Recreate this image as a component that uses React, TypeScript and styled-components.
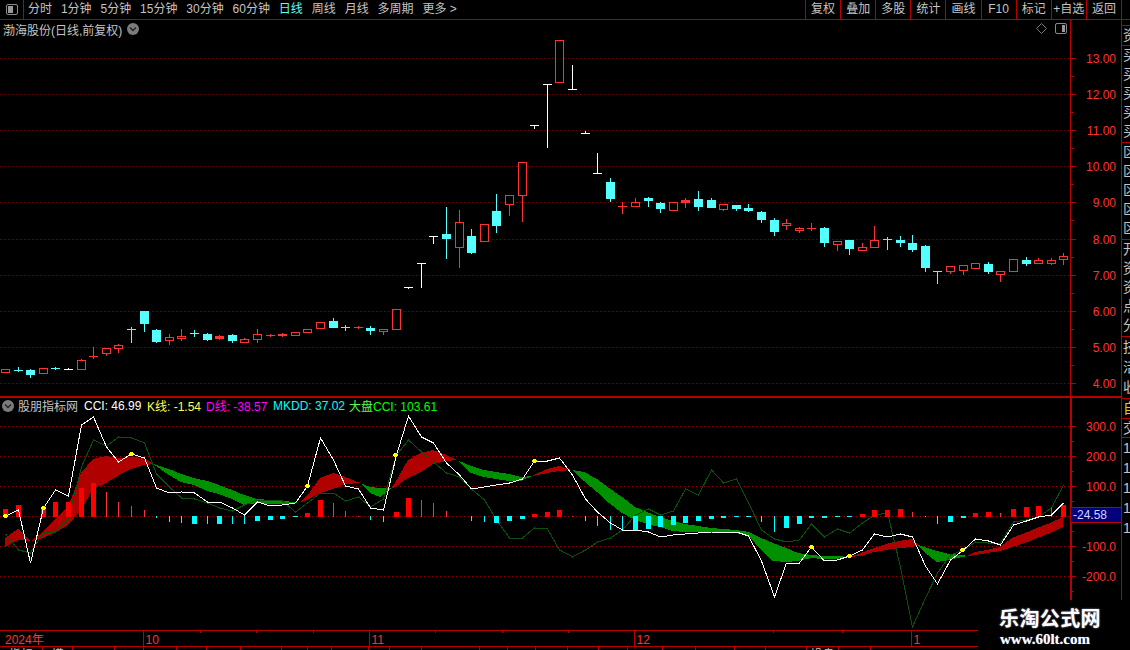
import React from "react";
import styled, { createGlobalStyle } from "styled-components";

const RED_LINE = "#b80000";
const AXIS_RED = "#ff3232";
const CYAN = "#54ffff";
const FONT = `"Liberation Sans", "Noto Sans CJK SC", sans-serif`;

const Global = createGlobalStyle`
  html, body { margin: 0; padding: 0; background: #000; }
  body { font-family: ${FONT}; font-size: 12px; }
`;

const Page = styled.div`
  position: relative;
  width: 1130px;
  height: 650px;
  overflow: hidden;
  background: #000;
  display: flex;
  flex-direction: column;
`;

const Toolbar = styled.div`
  height: 19px;
  flex: none;
  display: flex;
  align-items: center;
  border-bottom: 1px solid ${RED_LINE};
  color: #c4c4c4;
  line-height: 19px;
`;
const PanelToggle = styled.div`
  width: 23px;
  height: 19px;
  border-right: 1px solid ${RED_LINE};
  display: flex;
  align-items: center;
  justify-content: center;
  flex: none;
`;
const Periods = styled.div`
  display: flex;
  gap: 8.9px;
  padding-left: 4px;
`;
const Period = styled.span<{ $active?: boolean }>`
  color: ${(p) => (p.$active ? CYAN : "#c4c4c4")};
  white-space: nowrap;
`;
const Spacer = styled.div`
  flex: 1;
`;
const Actions = styled.div`
  display: flex;
  width: 316px;
  margin-right: 8px;
  border-right: 1px solid ${RED_LINE};
`;
const ActionButton = styled.div`
  flex: 1;
  height: 19px;
  border-left: 1px solid ${RED_LINE};
  text-align: center;
  white-space: nowrap;
  overflow: hidden;
`;

const Body = styled.div`
  flex: 1;
  display: flex;
  min-height: 0;
`;
const Charts = styled.div`
  width: 1121px;
  flex: none;
  display: flex;
  flex-direction: column;
`;
const Pane = styled.div<{ $h: number; $rule?: boolean }>`
  position: relative;
  height: ${(p) => p.$h}px;
  flex: none;
  display: flex;
  box-sizing: border-box;
  ${(p) => (p.$rule ? `border-bottom: 2px solid ${RED_LINE};` : "")}
`;
const Plot = styled.svg`
  display: block;
  width: 1070px;
  height: 100%;
  flex: none;
`;
const AxisSvg = styled.svg<{ $line: number }>`
  display: block;
  flex: 1;
  height: 100%;
  border-left: ${(p) => p.$line}px solid ${RED_LINE};
  box-sizing: border-box;
`;
const AxisLabel = styled.text`
  font-family: ${FONT};
  font-size: 12px;
  fill: ${AXIS_RED};
`;

const PaneTitle = styled.div`
  position: absolute;
  left: 3px;
  top: 1px;
  height: 16px;
  display: flex;
  align-items: center;
  gap: 5px;
  color: #c4c4c4;
  white-space: nowrap;
`;
const PaneTools = styled.div`
  position: absolute;
  left: 1036px;
  top: 3px;
  display: flex;
  align-items: center;
  gap: 8px;
`;
const IndicatorHeader = styled.div`
  position: absolute;
  left: 2px;
  top: 0;
  height: 15px;
  display: flex;
  align-items: center;
  white-space: nowrap;
`;
const IndicatorName = styled.span`
  color: #c4c4c4;
  margin-left: 4px;
  width: 66px;
`;
const Reading = styled.span<{ $c: string; $w: number }>`
  color: ${(p) => p.$c};
  width: ${(p) => p.$w}px;
`;
const Mark = styled.span<{ $c: string }>`
  color: ${(p) => p.$c};
`;
const ValueBadge = styled.div`
  position: absolute;
  left: 1071px;
  top: 109px;
  width: 50px;
  height: 16px;
  box-sizing: border-box;
  background: #00007c;
  border-top: 1px solid ${RED_LINE};
  border-bottom: 1px solid ${RED_LINE};
  color: #d4d4ff;
  line-height: 15px;
  padding-left: 2px;
`;

const DateAxis = styled.svg`
  display: block;
  width: 1121px;
  height: 16px;
  flex: none;
  border-top: 1px solid ${RED_LINE};
  box-sizing: border-box;
`;
const Tabs = styled.div`
  display: flex;
  flex: 1;
  overflow: hidden;
  border-top: 1px solid ${RED_LINE};
`;
const Tab = styled.div`
  flex: none;
  height: 18px;
  box-sizing: border-box;
  border-right: 1px solid ${RED_LINE};
  color: #c4c4c4;
  line-height: 16px;
  text-align: center;
  white-space: nowrap;
  overflow: hidden;
`;

const Side = styled.div`
  flex: 1;
  display: flex;
  flex-direction: column;
  border-left: 1px solid ${RED_LINE};
  overflow: hidden;
`;
const SideGap = styled.div<{ $h: number }>`
  height: ${(p) => p.$h}px;
  flex: none;
`;
const SideCell = styled.div<{ $h: number; $c?: string }>`
  height: ${(p) => p.$h}px;
  flex: none;
  box-sizing: border-box;
  border-top: 1px solid ${RED_LINE};
  overflow: hidden;
  color: ${(p) => p.$c || "#c4c4c4"};
  padding-left: 1px;
`;
const SideText = styled.div<{ $lh: number }>`
  width: 14px;
  font-size: 14px;
  line-height: ${(p) => p.$lh}px;
  word-break: break-all;
`;

const Watermark = styled.div`
  position: absolute;
  right: 0;
  bottom: 0;
  width: 152px;
  height: 50px;
  background: #000;
  display: flex;
  flex-direction: column;
  align-items: flex-start;
  padding-left: 21px;
  box-sizing: border-box;
  color: #fff;
`;
const WatermarkTitle = styled.div`
  margin-top: 7px;
  font-family: "Noto Sans CJK SC", serif;
  font-weight: 700;
  font-size: 20px;
  line-height: 22px;
  letter-spacing: 0.4px;
  text-shadow: 0 0 2px #9aa0c8;
`;
const WatermarkUrl = styled.div`
  margin-top: 3px;
  margin-left: 1px;
  font-family: "Liberation Serif", serif;
  font-weight: 700;
  font-size: 15px;
  line-height: 15px;
  text-shadow: 0 0 1px #8088c0;
`;

type Candle = [string, number, number, number, number];
// colour ('r' hollow red, 'R' solid red, 'c' cyan, 'w' white), wick top, body top, body bottom, wick bottom
const candles: Candle[] = [
  ["r", 369, 369, 372, 372], ["c", 367, 370, 370, 371], ["c", 369, 370, 374, 377], ["r", 368, 368, 373, 373],
  ["c", 367, 368, 368, 369], ["w", 368, 369, 369, 369], ["r", 359, 360, 369, 369], ["R", 347, 356, 356, 358],
  ["r", 348, 348, 353, 355], ["r", 344, 345, 348, 352], ["c", 327, 329, 329, 342], ["c", 311, 311, 323, 331],
  ["c", 329, 330, 341, 342], ["r", 334, 337, 340, 344], ["r", 329, 336, 338, 340], ["c", 330, 333, 333, 336],
  ["c", 333, 334, 339, 340], ["R", 335, 336, 338, 339], ["c", 334, 335, 340, 342], ["r", 338, 339, 342, 342],
  ["r", 329, 334, 339, 342], ["R", 334, 335, 335, 336], ["R", 333, 334, 335, 336], ["r", 332, 332, 335, 335],
  ["r", 329, 329, 332, 332], ["r", 322, 322, 328, 328], ["c", 318, 321, 327, 327], ["c", 325, 327, 327, 330],
  ["R", 326, 327, 327, 328], ["c", 326, 328, 330, 334], ["r", 329, 329, 331, 334], ["r", 309, 309, 329, 329],
  ["w", 287, 287, 287, 288], ["w", 263, 263, 263, 287], ["w", 236, 236, 236, 243], ["c", 207, 234, 238, 258],
  ["r", 210, 222, 247, 267], ["c", 229, 236, 252, 253], ["r", 224, 224, 241, 241], ["c", 194, 211, 225, 232],
  ["r", 195, 195, 204, 215], ["r", 162, 162, 195, 221], ["w", 125, 125, 125, 128], ["w", 84, 84, 84, 147],
  ["r", 40, 40, 82, 82], ["w", 65, 89, 89, 89], ["w", 131, 133, 133, 133], ["w", 153, 173, 173, 173],
  ["c", 178, 182, 198, 201], ["R", 202, 206, 206, 213], ["r", 198, 202, 206, 206], ["c", 197, 198, 200, 206],
  ["c", 202, 203, 208, 212], ["r", 202, 202, 210, 210], ["R", 198, 200, 202, 207], ["c", 191, 199, 206, 210],
  ["c", 198, 200, 207, 207], ["r", 204, 204, 209, 210], ["c", 205, 205, 208, 210], ["c", 204, 208, 210, 211],
  ["c", 211, 212, 219, 222], ["c", 218, 220, 231, 235], ["r", 219, 223, 225, 229], ["r", 227, 228, 230, 232],
  ["R", 223, 228, 228, 230], ["c", 227, 228, 242, 246], ["r", 241, 241, 244, 250], ["c", 240, 240, 248, 254],
  ["r", 243, 247, 250, 250], ["r", 226, 240, 247, 247], ["c", 237, 239, 239, 249], ["c", 236, 240, 242, 246],
  ["c", 235, 243, 249, 251], ["c", 245, 246, 267, 271], ["c", 271, 271, 271, 283], ["r", 266, 266, 271, 273],
  ["r", 265, 265, 270, 274], ["r", 263, 263, 268, 268], ["c", 262, 264, 271, 273], ["r", 271, 271, 274, 281],
  ["r", 259, 259, 271, 271], ["c", 257, 260, 263, 265], ["r", 258, 260, 263, 263], ["r", 258, 260, 263, 264],
  ["r", 253, 256, 259, 264],
];

const white = [516, 510, 563, 508, 490, 496, 425, 417, 447, 462, 454, 458, 488, 493, 492, 493, 502, 502, 508, 515, 502, 506, 505, 503, 486, 438, 460, 486, 489, 508, 510, 455, 416, 437, 443, 463, 475, 489, 487, 485, 483, 479, 461, 461, 458, 475, 499, 512, 523, 530, 530, 532, 537, 535, 534, 533, 532, 532, 532, 536, 561, 597, 563, 563, 547, 561, 560, 556, 550, 534, 537, 534, 537, 566, 584, 560, 550, 539, 541, 545, 525, 521, 517, 515, 503];
const green = [534, 550, 553, 532, 532, 518, 467, 440, 446, 437, 438, 443, 474, 487, 498, 499, 503, 508, 511, 505, 500, 500, 501, 512, 503, 493, 493, 501, 497, 507, 499, 455, 440, 452, 462, 473, 477, 489, 500, 520, 538, 538, 528, 529, 550, 557, 550, 542, 538, 530, 515, 509, 515, 511, 489, 495, 470, 483, 479, 503, 530, 539, 542, 540, 524, 537, 529, 533, 523, 515, 513, 567, 627, 598, 573, 555, 550, 542, 543, 543, 522, 520, 517, 508, 485];
const bars = [8, 12, 0, 8, 15, 15, 29, 34, 25, 15, 11, 7, -2, -6, -7, -8, -8, -8, -8, -8, -5, -4, -3, -1, 4, 17, 14, 6, 1, -4, -6, 5, 19, 17, 14, 6, 0, -5, -6, -7, -5, -3, 3, 5, 7, 1, -5, -10, -14, -15, -15, -13, -11, -9, -7, -5, -3, -2, -1, -1, -6, -16, -12, -8, -2, -2, -1, -1, 3, 7, 7, 8, 5, -1, -8, -6, -2, 4, 5, 4, 8, 10, 11, 10, 12];
const thinBars = new Set([8, 9, 10, 11, 12, 13, 14, 16, 18, 19, 26, 27, 28, 29, 30, 33, 34, 35, 37, 38, 45, 46, 47, 48, 49, 60, 61, 72, 73, 74, 79, 83]);

type Band = [number, number, number];
const ribbons: { c: string; p: Band[] }[] = [
  { c: "#b00000", p: [[5, 538, 547], [18, 529, 540], [31, 541, 541], [43, 532, 538], [56, 518, 532], [68, 507, 525], [81, 473, 510], [93, 459, 489], [106, 456, 483], [119, 458, 475], [131, 457, 469], [144, 458, 465], [153, 464, 464]] },
  { c: "#009000", p: [[153, 464, 464], [169, 469, 475], [181, 474, 482], [194, 478, 485], [207, 481, 491], [219, 485, 494], [232, 490, 499], [244, 495, 505], [257, 499, 503], [270, 500, 504], [282, 501, 504], [295, 502, 503], [299, 503, 503]] },
  { c: "#b00000", p: [[299, 503, 503], [307, 496, 500], [320, 478, 493], [333, 473, 489], [345, 477, 484], [360, 483, 483]] },
  { c: "#009000", p: [[360, 483, 483], [370, 487, 493], [380, 488, 497], [392, 488, 488]] },
  { c: "#b00000", p: [[392, 488, 488], [395, 483, 487], [408, 460, 478], [421, 453, 472], [433, 450, 464], [446, 455, 461], [457, 460, 460]] },
  { c: "#009000", p: [[457, 460, 460], [471, 466, 473], [484, 470, 477], [496, 472, 479], [509, 474, 481], [521, 477, 481], [532, 476, 476]] },
  { c: "#b00000", p: [[532, 476, 476], [547, 469, 473], [559, 466, 471], [572, 470, 470]] },
  { c: "#009000", p: [[572, 470, 470], [584, 472, 481], [597, 479, 492], [609, 488, 503], [622, 497, 513], [635, 507, 520], [647, 512, 524], [660, 517, 527], [673, 521, 531], [685, 524, 532], [698, 526, 532], [711, 528, 533], [723, 529, 533], [736, 530, 533], [749, 532, 536], [761, 538, 550], [773, 543, 561], [786, 548, 562], [798, 553, 561], [811, 555, 558], [823, 556, 559], [836, 556, 559], [849, 557, 557]] },
  { c: "#b00000", p: [[849, 557, 557], [861, 553, 556], [874, 548, 552], [886, 544, 550], [899, 541, 548], [912, 539, 547], [918, 545, 545]] },
  { c: "#009000", p: [[918, 545, 545], [924, 547, 552], [937, 551, 562], [949, 554, 560], [962, 555, 557], [967, 556, 556]] },
  { c: "#b00000", p: [[967, 556, 556], [975, 552, 555], [987, 550, 553], [1000, 547, 551], [1012, 538, 547], [1025, 533, 543], [1037, 528, 538], [1050, 523, 533], [1063, 517, 527]] },
];
const dots: [number, number][] = [[5, 516], [43, 508], [131, 454], [307, 486], [395, 455], [534, 461], [811, 547], [849, 556], [962, 550]];

const colX = (i: number) => Math.floor(5.5 + 12.6 * i);
const poly = (ys: number[]) => ys.map((y, i) => `${colX(i) + 0.5},${y}`).join(" ");
const priceY = (n: number) => Math.floor(58.5 + 36.1 * n) + 0.5;
const cciY = (n: number) => Math.floor(426.3 + 30 * n) + 0.5;

const Toggle = ({ side }: { side: "l" | "r" }) => (
  <svg width="12" height="11" viewBox="0 0 12 11">
    <rect x="0.5" y="0.5" width="11" height="10" rx="1.5" fill="none" stroke="#8a8a8a" />
    <rect x={side === "l" ? 2 : 7} y="2" width={side === "l" ? 5 : 3} height="7" fill="#9a9a9a" />
  </svg>
);

const Chevron = () => (
  <svg width="12" height="12" viewBox="0 0 12 12">
    <circle cx="6" cy="6" r="6" fill="#7c7c7c" />
    <polyline points="3,4.5 6,7.5 9,4.5" fill="none" stroke="#222" strokeWidth="1.4" />
  </svg>
);

const Diamond = () => (
  <svg width="11" height="11" viewBox="0 0 11 11">
    <polygon points="5.5,0.5 10.5,5.5 5.5,10.5 0.5,5.5" fill="none" stroke="#7c7c7c" />
  </svg>
);

const CandleMark = ({ d, i }: { d: Candle; i: number }) => {
  const [k, hi, top, bot, lo] = d;
  const x = colX(i);
  const col = k === "c" ? CYAN : k === "w" ? "#fff" : AXIS_RED;
  const wick = <line x1={x + 0.5} x2={x + 0.5} y1={hi} y2={lo + 1} stroke={col} />;
  if (top === bot) {
    return (
      <g>
        {wick}
        <rect x={x - 4} y={top} width={9} height={1} fill={col} />
      </g>
    );
  }
  if (k === "r") {
    return (
      <g>
        {wick}
        <rect x={x - 3.5} y={top + 0.5} width={8} height={bot - top} fill="#000" stroke={col} />
      </g>
    );
  }
  return (
    <g>
      {wick}
      <rect x={x - 4} y={top} width={9} height={bot - top + 1} fill={col} />
    </g>
  );
};

const priceLabels = ["13.00", "12.00", "11.00", "10.00", "9.00", "8.00", "7.00", "6.00", "5.00", "4.00"];
const cciLabels = ["300.0", "200.0", "100.0", "", "-100.0", "-200.0"];

const PriceChart = () => (
  <Plot viewBox="0 20 1070 376" shapeRendering="crispEdges">
    {priceLabels.map((_, n) => (
      <line key={n} x1={0} x2={1070} y1={priceY(n)} y2={priceY(n)} stroke="#780000" strokeDasharray="1 3" />
    ))}
    {candles.map((d, i) => (
      <CandleMark key={i} d={d} i={i} />
    ))}
  </Plot>
);

const PriceAxis = () => (
  <AxisSvg $line={1} viewBox="1071 20 50 376">
    {priceLabels.map((t, n) => (
      <g key={t}>
        <line x1={1071} x2={1076} y1={priceY(n)} y2={priceY(n)} stroke={RED_LINE} shapeRendering="crispEdges" />
        <line x1={1071} x2={1074} y1={priceY(n) + 18} y2={priceY(n) + 18} stroke={RED_LINE} shapeRendering="crispEdges" />
        <AxisLabel x={1116} y={priceY(n) + 4.5} textAnchor="end">{t}</AxisLabel>
      </g>
    ))}
  </AxisSvg>
);

const CciChart = () => (
  <Plot viewBox="0 398 1070 232" shapeRendering="crispEdges">
    {cciLabels.map((_, n) => (
      <line key={n} x1={0} x2={1070} y1={cciY(n)} y2={cciY(n)} stroke="#960000" strokeDasharray="1 3" />
    ))}
    {ribbons.map((r, i) => (
      <polygon
        key={i}
        fill={r.c}
        points={[...r.p.map((b) => `${b[0]},${b[1]}`), ...[...r.p].reverse().map((b) => `${b[0]},${b[2]}`)].join(" ")}
      />
    ))}
    <polyline points={poly(green)} fill="none" stroke="#0b500b" />
    {bars.map((h, i) => {
      if (!h) return null;
      const thin = thinBars.has(i);
      const x = colX(i);
      const fill = h < 0 ? "#00ffff" : thin ? AXIS_RED : "#ff0000";
      return (
        <rect
          key={i}
          x={thin ? x : x - 2}
          y={h > 0 ? 517 - h : 516}
          width={thin ? 1 : 5}
          height={Math.abs(h)}
          fill={fill}
        />
      );
    })}
    <polyline points={poly(white)} fill="none" stroke="#fff" />
    {dots.map(([x, y], i) => (
      <circle key={i} cx={x + 0.5} cy={y} r={2.3} fill="#ffff00" />
    ))}
  </Plot>
);

const CciAxis = () => (
  <AxisSvg $line={2} viewBox="1072 398 49 232">
    {cciLabels.map((t, n) => (
      <g key={n}>
        <line x1={1072} x2={1076} y1={cciY(n)} y2={cciY(n)} stroke={RED_LINE} shapeRendering="crispEdges" />
        <line x1={1072} x2={1074} y1={cciY(n) + 15} y2={cciY(n) + 15} stroke={RED_LINE} shapeRendering="crispEdges" />
        {t && <AxisLabel x={1116} y={cciY(n) + 4.5} textAnchor="end">{t}</AxisLabel>}
      </g>
    ))}
  </AxisSvg>
);

const dateMarks: [number, string][] = [[143, "10"], [369, "11"], [634, "12"], [911, "1"]];
const dateTicks = [200, 256, 313, 435, 502, 568, 773, 842];

const Dates = () => (
  <DateAxis viewBox="0 631 1121 15">
    <AxisLabel x={5} y={643.5} fontSize={12}>2024年</AxisLabel>
    {dateMarks.map(([x, t]) => (
      <g key={t}>
        <line x1={x + 0.5} x2={x + 0.5} y1={631} y2={646} stroke={RED_LINE} shapeRendering="crispEdges" />
        <AxisLabel x={x + 2.5} y={643.5}>{t}</AxisLabel>
      </g>
    ))}
    {dateTicks.map((x) => (
      <line key={x} x1={x + 0.5} x2={x + 0.5} y1={631} y2={633} stroke={RED_LINE} shapeRendering="crispEdges" />
    ))}
  </DateAxis>
);

const tabEdges = [43, 73, 115, 144, 177, 207, 241, 282, 308, 332, 369, 390, 422, 480, 508, 536, 568, 599, 628, 663, 696, 735, 766, 807, 839, 871, 1121];
const tabNames: Record<number, string> = { 0: "指标", 1: "模", 24: "操盘" };

const sideCells: { h: number; lh: number; t: string; c?: string }[] = [
  { h: 20, lh: 19, t: "资" },
  { h: 97, lh: 19, t: "买买买买买" },
  { h: 97, lh: 19, t: "区区区区区" },
  { h: 97, lh: 19, t: "开资资点分" },
  { h: 62, lh: 20, t: "技活收" },
  { h: 20, lh: 19, t: "自", c: "#d8d800" },
  { h: 19, lh: 18, t: "交" },
  { h: 163, lh: 20, t: "11111111" },
];

const periods = ["分时", "1分钟", "5分钟", "15分钟", "30分钟", "60分钟", "日线", "周线", "月线", "多周期", "更多 >"];
const actions = ["复权", "叠加", "多股", "统计", "画线", "F10", "标记", "+自选", "返回"];

export default function App() {
  return (
    <Page>
      <Global />
      <Toolbar>
        <PanelToggle>
          <Toggle side="l" />
        </PanelToggle>
        <Periods>
          {periods.map((p) => (
            <Period key={p} $active={p === "日线"}>{p}</Period>
          ))}
        </Periods>
        <Spacer />
        <Actions>
          {actions.map((a) => (
            <ActionButton key={a}>{a}</ActionButton>
          ))}
        </Actions>
      </Toolbar>
      <Body>
        <Charts>
          <Pane $h={378} $rule>
            <PriceChart />
            <PriceAxis />
            <PaneTitle>
              <span>渤海股份(日线,前复权)</span>
              <Chevron />
            </PaneTitle>
            <PaneTools>
              <Diamond />
              <Toggle side="r" />
            </PaneTools>
          </Pane>
          <Pane $h={232}>
            <CciChart />
            <CciAxis />
            <IndicatorHeader>
              <Chevron />
              <IndicatorName>股朋指标网</IndicatorName>
              <Reading $c="#ffffff" $w={63}>CCI: 46.99</Reading>
              <Reading $c="#ffff54" $w={59}>K线: -1.54</Reading>
              <Reading $c="#ff00ff" $w={67}>D线: -38.57</Reading>
              <Reading $c="#00ffff" $w={76}>MKDD: 37.02</Reading>
              <Reading $c="#00ff00" $w={90}>
                <Mark $c="#54ff54">大盘</Mark>CCI: 103.61
              </Reading>
            </IndicatorHeader>
            <ValueBadge>-24.58</ValueBadge>
          </Pane>
          <Dates />
          <Tabs>
            {tabEdges.map((e, i) => (
              <Tab key={e} style={{ width: e - (i ? tabEdges[i - 1] : 0) }}>
                {tabNames[i]}
              </Tab>
            ))}
          </Tabs>
        </Charts>
        <Side>
          <SideGap $h={5} />
          {sideCells.map((c, i) => (
            <SideCell key={i} $h={c.h} $c={c.c}>
              <SideText $lh={c.lh}>{c.t}</SideText>
            </SideCell>
          ))}
        </Side>
      </Body>
      <Watermark>
        <WatermarkTitle>乐淘公式网</WatermarkTitle>
        <WatermarkUrl>www.60lt.com</WatermarkUrl>
      </Watermark>
    </Page>
  );
}
